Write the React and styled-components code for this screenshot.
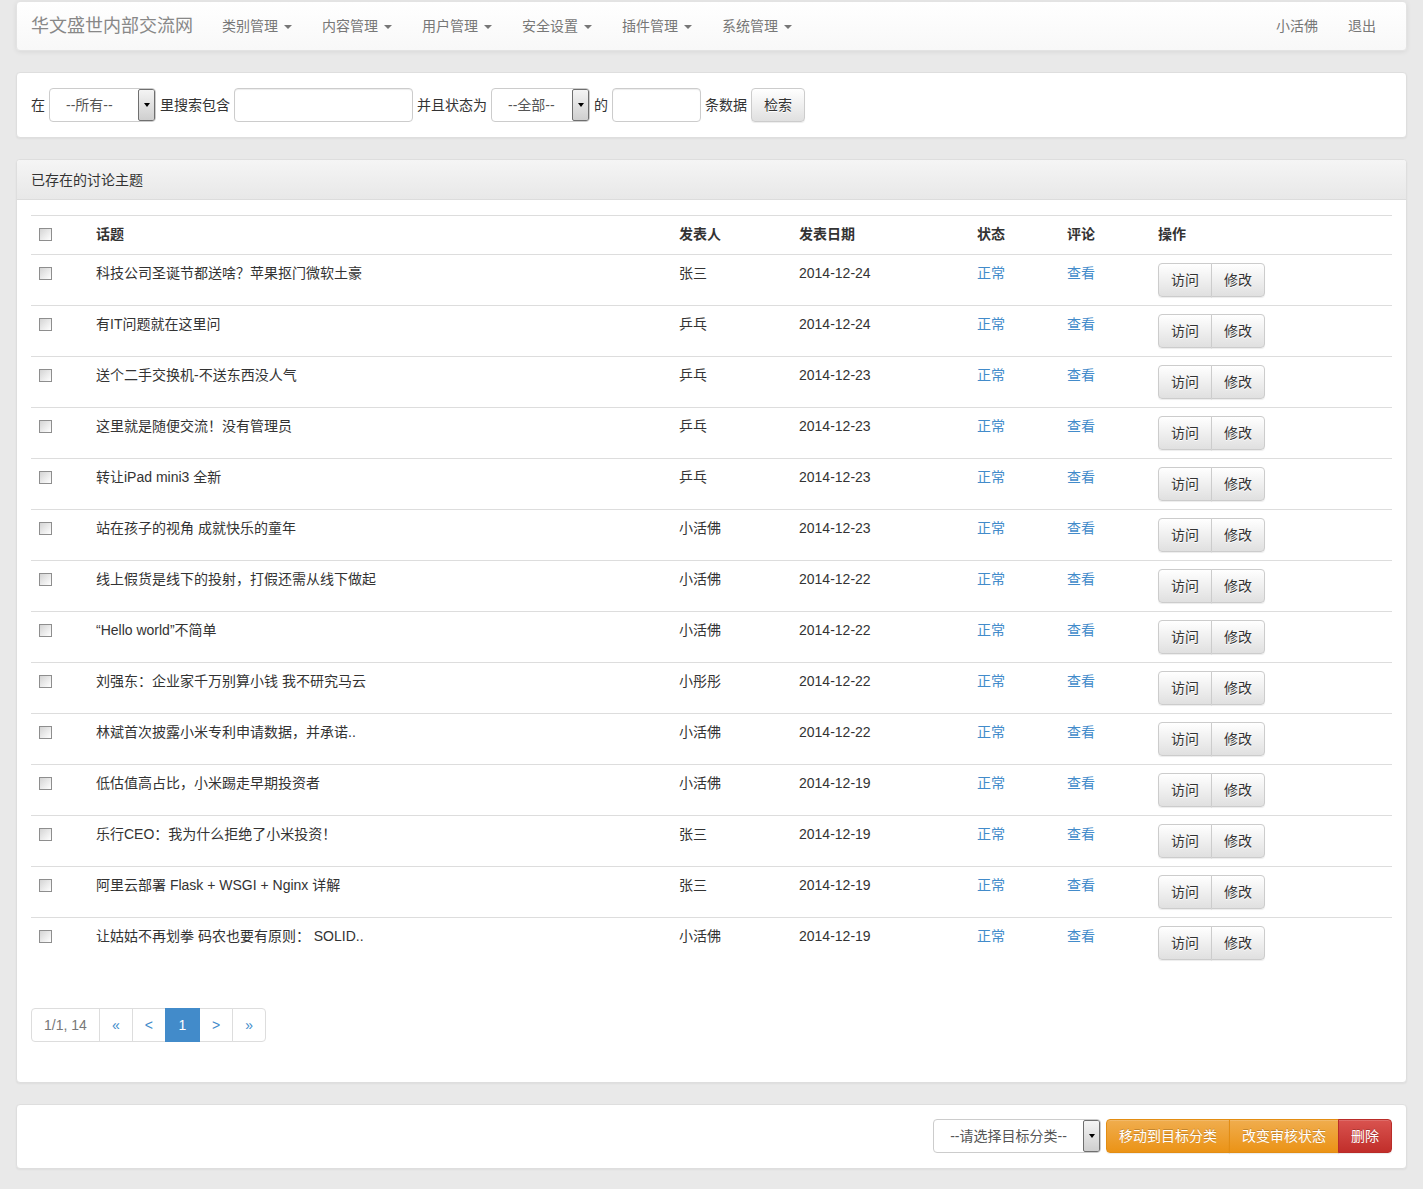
import React from "react";
import styled, { createGlobalStyle } from "styled-components";

const Global = createGlobalStyle`
  html, body { margin: 0; padding: 0; }
  body {
    background: #e9e9e9;
    font-family: "Liberation Sans", Arial, "Noto Sans CJK SC", sans-serif;
    font-size: 14px;
    line-height: 20px;
    color: #333;
  }
  * { box-sizing: border-box; }
`;

const Page = styled.div`
  padding: 1px 16px 0;
`;

const Navbar = styled.div`
  height: 50px;
  display: flex;
  align-items: center;
  background: linear-gradient(to bottom, #ffffff 0%, #f8f8f8 100%);
  border: 1px solid #e3e3e3;
  border-radius: 4px;
  box-shadow: 0 1px 5px rgba(0, 0, 0, 0.075);
  margin-bottom: 21px;
  padding-right: 15px;
`;

const Brand = styled.div`
  font-size: 18px;
  color: #888;
  padding: 0 14px;
  line-height: 48px;
`;

const NavItem = styled.div`
  padding: 0 15px;
  color: #777;
  line-height: 48px;
  display: flex;
  align-items: center;
  gap: 6px;
`;

const Caret = styled.span`
  width: 0;
  height: 0;
  border-top: 4px solid #777;
  border-left: 4px solid transparent;
  border-right: 4px solid transparent;
  margin-top: 1px;
`;

const Spacer = styled.div`
  flex: 1;
`;

const Panel = styled.div`
  background: #fff;
  border: 1px solid #dedede;
  border-radius: 4px;
  box-shadow: 0 1px 2px rgba(0, 0, 0, 0.05);
  margin-bottom: 21px;
`;

const PanelBody = styled.div`
  padding: ${(p) => (p.$tight ? "14px 14px 15px" : "15px 14px")};
`;

const PanelHeading = styled.div`
  height: 40px;
  padding: 0 14px;
  display: flex;
  align-items: center;
  background: linear-gradient(to bottom, #f5f5f5 0%, #e8e8e8 100%);
  border-bottom: 1px solid #dcdcdc;
  border-radius: 3px 3px 0 0;
  color: #333;
`;

const SearchRow = styled.div`
  display: flex;
  align-items: center;
  gap: 4px;
`;

const Label = styled.span`
  color: #333;
  white-space: nowrap;
`;

const FakeSelect = styled.div`
  width: ${(p) => p.$w}px;
  height: 34px;
  border: 1px solid #ccc;
  border-radius: 4px;
  display: flex;
  align-items: stretch;
  background: #fff;
  overflow: hidden;
`;

const SelectText = styled.div`
  flex: 1;
  display: flex;
  align-items: center;
  justify-content: ${(p) => (p.$center ? "center" : "flex-start")};
  padding-left: ${(p) => (p.$center ? 0 : 16)}px;
  color: #555;
`;

const SelectArrow = styled.div`
  width: 17px;
  border: 1px solid #6f6f6f;
  border-radius: 2px;
  background: linear-gradient(to bottom, #f4f4f4 0%, #cfcfcf 100%);
  display: flex;
  align-items: center;
  justify-content: center;
  &::after {
    content: "";
    border-top: 4px solid #000;
    border-left: 3.5px solid transparent;
    border-right: 3.5px solid transparent;
  }
`;

const TextInput = styled.input`
  width: ${(p) => p.$w}px;
  height: 34px;
  border: 1px solid #ccc;
  border-radius: 4px;
  box-shadow: inset 0 1px 1px rgba(0, 0, 0, 0.075);
  outline: none;
  padding: 6px 12px;
  font: inherit;
`;

const DefaultButton = styled.button`
  height: 34px;
  padding: 6px 12px;
  font: inherit;
  color: #333;
  background: linear-gradient(to bottom, #ffffff 0%, #e0e0e0 100%);
  border: 1px solid #ccc;
  border-radius: 4px;
  box-shadow: inset 0 1px 0 rgba(255, 255, 255, 0.15), 0 1px 1px rgba(0, 0, 0, 0.075);
  text-shadow: 0 1px 0 #fff;
  cursor: pointer;
  white-space: nowrap;
`;

const Table = styled.table`
  width: 100%;
  border-collapse: collapse;
  table-layout: fixed;
  margin-bottom: 20px;
`;

const Th = styled.th`
  text-align: left;
  font-weight: bold;
  padding: 8px 8px 10px;
  border-top: 1px solid #ddd;
  border-bottom: 1px solid #ddd;
  color: #333;
  vertical-align: top;
`;

const Td = styled.td`
  padding: 8px 8px;
  border-top: 1px solid #ddd;
  vertical-align: top;
  color: #333;
  white-space: nowrap;
`;

const Check = styled.span`
  display: block;
  width: 13px;
  height: 13px;
  margin-top: ${(p) => p.$top}px;
  border: 1px solid #8e8e8e;
  background: linear-gradient(135deg, #d4d4d4 0%, #f2f2f2 70%, #fff 100%);
`;

const Link = styled.a`
  color: #428bca;
  text-decoration: none;
`;

const BtnGroup = styled.div`
  display: inline-flex;
  & > button:first-child {
    border-top-right-radius: 0;
    border-bottom-right-radius: 0;
  }
  & > button:last-child {
    border-top-left-radius: 0;
    border-bottom-left-radius: 0;
    margin-left: -1px;
  }
`;

const Pagination = styled.ul`
  display: inline-flex;
  list-style: none;
  padding: 0;
  margin: 20px 0 25px;
  border-radius: 4px;
`;

const PageItem = styled.li`
  height: 34px;
  padding: 6px 12px;
  border: 1px solid #ddd;
  margin-left: -1px;
  color: ${(p) => (p.$active ? "#fff" : p.$muted ? "#777" : "#428bca")};
  background: ${(p) => (p.$active ? "#428bca" : "#fff")};
  border-color: ${(p) => (p.$active ? "#428bca" : "#ddd")};
  position: relative;
  z-index: ${(p) => (p.$active ? 2 : 1)};
  min-width: ${(p) => p.$w || 0}px;
  text-align: center;
  &:first-child {
    margin-left: 0;
    border-radius: 4px 0 0 4px;
  }
  &:last-child {
    border-radius: 0 4px 4px 0;
  }
`;

const ActionBar = styled.div`
  display: flex;
  justify-content: flex-end;
  align-items: center;
  gap: 5px;
`;

const ColorGroup = styled.div`
  display: flex;
`;

const ColorButton = styled.button`
  height: 34px;
  padding: 6px 12px;
  font: inherit;
  color: #fff;
  border: 1px solid ${(p) => (p.$danger ? "#b92c28" : "#e38d13")};
  background: ${(p) =>
    p.$danger
      ? "linear-gradient(to bottom, #d9534f 0%, #c12e2a 100%)"
      : "linear-gradient(to bottom, #f0ad4e 0%, #eb9316 100%)"};
  text-shadow: 0 -1px 0 rgba(0, 0, 0, 0.2);
  box-shadow: inset 0 1px 0 rgba(255, 255, 255, 0.15), 0 1px 1px rgba(0, 0, 0, 0.075);
  margin-left: -1px;
  white-space: nowrap;
  &:first-child {
    margin-left: 0;
    border-radius: 4px 0 0 4px;
  }
  &:last-child {
    border-radius: 0 4px 4px 0;
  }
`;

const rows = [
  ["科技公司圣诞节都送啥？苹果抠门微软土豪", "张三", "2014-12-24"],
  ["有IT问题就在这里问", "乒乓", "2014-12-24"],
  ["送个二手交换机-不送东西没人气", "乒乓", "2014-12-23"],
  ["这里就是随便交流！没有管理员", "乒乓", "2014-12-23"],
  ["转让iPad mini3 全新", "乒乓", "2014-12-23"],
  ["站在孩子的视角 成就快乐的童年", "小活佛", "2014-12-23"],
  ["线上假货是线下的投射，打假还需从线下做起", "小活佛", "2014-12-22"],
  ["“Hello world”不简单", "小活佛", "2014-12-22"],
  ["刘强东：企业家千万别算小钱 我不研究马云", "小彤彤", "2014-12-22"],
  ["林斌首次披露小米专利申请数据，并承诺..", "小活佛", "2014-12-22"],
  ["低估值高占比，小米踢走早期投资者", "小活佛", "2014-12-19"],
  ["乐行CEO：我为什么拒绝了小米投资！", "张三", "2014-12-19"],
  ["阿里云部署 Flask + WSGI + Nginx 详解", "张三", "2014-12-19"],
  ["让姑姑不再划拳 码农也要有原则： SOLID..", "小活佛", "2014-12-19"],
];

const navs = ["类别管理", "内容管理", "用户管理", "安全设置", "插件管理", "系统管理"];

export default function App() {
  return (
    <>
      <Global />
      <Page>
        <Navbar>
          <Brand>华文盛世内部交流网</Brand>
          {navs.map((n) => (
            <NavItem key={n}>
              {n}
              <Caret />
            </NavItem>
          ))}
          <Spacer />
          <NavItem>小活佛</NavItem>
          <NavItem>退出</NavItem>
        </Navbar>

        <Panel>
          <PanelBody>
            <SearchRow>
              <Label>在</Label>
              <FakeSelect $w={107}>
                <SelectText>--所有--</SelectText>
                <SelectArrow />
              </FakeSelect>
              <Label>里搜索包含</Label>
              <TextInput $w={179} />
              <Label>并且状态为</Label>
              <FakeSelect $w={99}>
                <SelectText>--全部--</SelectText>
                <SelectArrow />
              </FakeSelect>
              <Label>的</Label>
              <TextInput $w={89} />
              <Label>条数据</Label>
              <DefaultButton>检索</DefaultButton>
            </SearchRow>
          </PanelBody>
        </Panel>

        <Panel>
          <PanelHeading>已存在的讨论主题</PanelHeading>
          <PanelBody>
            <Table>
              <colgroup>
                <col style={{ width: 57 }} />
                <col style={{ width: 583 }} />
                <col style={{ width: 120 }} />
                <col style={{ width: 178 }} />
                <col style={{ width: 90 }} />
                <col style={{ width: 91 }} />
                <col />
              </colgroup>
              <thead>
                <tr>
                  <Th>
                    <Check $top={4} />
                  </Th>
                  <Th>话题</Th>
                  <Th>发表人</Th>
                  <Th>发表日期</Th>
                  <Th>状态</Th>
                  <Th>评论</Th>
                  <Th>操作</Th>
                </tr>
              </thead>
              <tbody>
                {rows.map(([title, author, date], i) => (
                  <tr key={i}>
                    <Td>
                      <Check $top={4} />
                    </Td>
                    <Td>{title}</Td>
                    <Td>{author}</Td>
                    <Td>{date}</Td>
                    <Td>
                      <Link href="#">正常</Link>
                    </Td>
                    <Td>
                      <Link href="#">查看</Link>
                    </Td>
                    <Td>
                      <BtnGroup>
                        <DefaultButton>访问</DefaultButton>
                        <DefaultButton>修改</DefaultButton>
                      </BtnGroup>
                    </Td>
                  </tr>
                ))}
              </tbody>
            </Table>
            <Pagination>
              <PageItem $muted>1/1, 14</PageItem>
              <PageItem $w={34}>«</PageItem>
              <PageItem $w={34}>&lt;</PageItem>
              <PageItem $active $w={35}>1</PageItem>
              <PageItem $w={33}>&gt;</PageItem>
              <PageItem $w={34}>»</PageItem>
            </Pagination>
          </PanelBody>
        </Panel>

        <Panel>
          <PanelBody $tight>
            <ActionBar>
              <FakeSelect $w={168}>
                <SelectText $center>--请选择目标分类--</SelectText>
                <SelectArrow />
              </FakeSelect>
              <ColorGroup>
                <ColorButton>移动到目标分类</ColorButton>
                <ColorButton>改变审核状态</ColorButton>
                <ColorButton $danger>删除</ColorButton>
              </ColorGroup>
            </ActionBar>
          </PanelBody>
        </Panel>
      </Page>
    </>
  );
}
